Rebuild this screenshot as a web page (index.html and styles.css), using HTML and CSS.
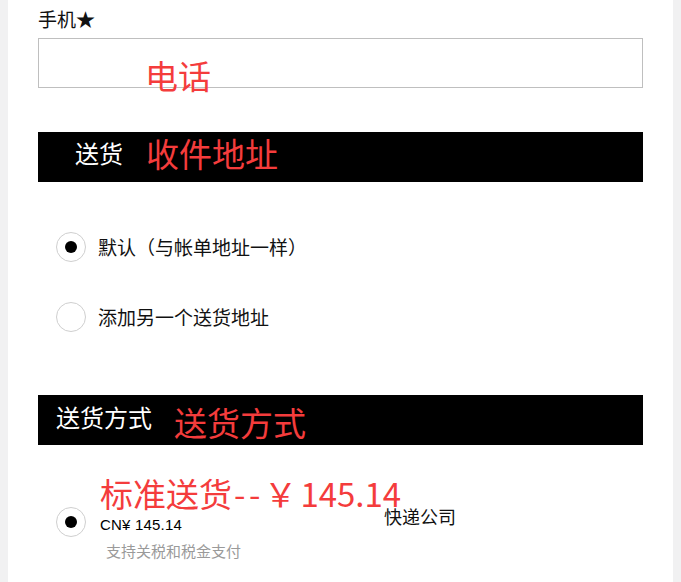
FILE: index.html
```html
<!DOCTYPE html>
<html lang="zh-CN">
<head>
<meta charset="utf-8">
<title>送货</title>
<link rel="stylesheet" href="styles.css">
</head>
<body>
<div class="page">
  <section class="field">
    <label class="field-label" for="phone">手机★</label>
    <input class="field-input" id="phone" type="text">
    <span class="note note-phone">电话</span>
  </section>

  <section class="block">
    <div class="bar bar-delivery">
      <h2 class="bar-title">送货</h2>
      <span class="note note-address">收件地址</span>
    </div>
    <div class="options">
      <div class="option">
        <span class="radio radio-checked"></span>
        <span class="option-label">默认（与帐单地址一样）</span>
      </div>
      <div class="option">
        <span class="radio"></span>
        <span class="option-label">添加另一个送货地址</span>
      </div>
    </div>
  </section>

  <section class="block">
    <div class="bar bar-method">
      <h2 class="bar-title">送货方式</h2>
      <span class="note note-method">送货方式</span>
    </div>
    <div class="shipping">
      <span class="note note-price">标准送货<span class="note-sep">--￥</span>145.14</span>
      <div class="ship-row">
        <span class="radio radio-checked ship-radio"></span>
        <div class="ship-info">
          <div class="ship-price">CN¥ 145.14</div>
          <div class="ship-desc">支持关税和税金支付</div>
        </div>
        <div class="ship-carrier">快递公司</div>
      </div>
    </div>
  </section>
</div>
</body>
</html>
```

FILE: styles.css
```css
html, body {
  margin: 0;
  padding: 0;
}

body {
  background: #f1f1f2;
  font-family: "Noto Sans CJK SC", "Noto Sans", sans-serif;
  color: #111;
}

.page {
  margin: 0 8px;
  background: #fff;
  min-height: 100vh;
  padding: 0 30px 40px;
  box-sizing: border-box;
}

.field {
  position: relative;
  padding-top: 6px;
}

.field-label {
  display: block;
  font-size: 19px;
  line-height: 26px;
  color: #111;
}

.field-input {
  display: block;
  margin: 6px 0 0;
  width: 100%;
  height: 50px;
  box-sizing: border-box;
  border: 1px solid #bfbfbf;
  background: #fff;
  padding: 0 12px;
  font: inherit;
  outline: none;
}

.note {
  position: absolute;
  color: #f43c3c;
  font-size: 33px;
  line-height: 40px;
  white-space: nowrap;
  font-family: "Noto Sans CJK SC", sans-serif;
}

.note-phone {
  left: 107px;
  top: 55px;
}

.block {
  position: relative;
}

.bar {
  position: relative;
  height: 50px;
  box-sizing: border-box;
  background: #000;
  padding-top: 6px;
}

.bar-delivery {
  margin-top: 44px;
  padding-left: 37px;
}

.bar-method {
  margin-top: 63px;
  padding-left: 18px;
  padding-top: 7px;
}

.bar-title {
  margin: 0;
  font-weight: normal;
  font-size: 24px;
  line-height: 30px;
  color: #fff;
}

.note-address {
  left: 108px;
  top: 1px;
}

.note-method {
  left: 136px;
  top: 7px;
}

.options {
  padding: 50px 0 0 18px;
  display: flex;
  flex-direction: column;
  gap: 40px;
}

.option {
  display: flex;
  align-items: center;
  gap: 12px;
  height: 30px;
}

.option-label {
  font-size: 19px;
  line-height: 30px;
  color: #111;
}

.radio {
  flex: none;
  width: 30px;
  height: 30px;
  box-sizing: border-box;
  border: 1px solid #cfcfcf;
  border-radius: 50%;
  display: flex;
  align-items: center;
  justify-content: center;
  background: #fff;
}

.radio-checked::after {
  content: "";
  width: 12px;
  height: 12px;
  border-radius: 50%;
  background: #000;
}

.shipping {
  position: relative;
  padding: 59px 0 0 18px;
}

.note-price {
  left: 62px;
  top: 28px;
}

.note-sep {
  letter-spacing: 3.5px;
  padding-left: 2px;
}

.ship-row {
  display: flex;
  align-items: flex-start;
}

.ship-radio {
  margin-top: 3px;
}

.ship-info {
  width: 284px;
  margin-left: 14px;
  padding-top: 11.7px;
  flex: none;
}

.ship-price {
  font-family: "Liberation Sans", Arial, sans-serif;
  font-size: 15px;
  line-height: 18px;
  color: #000;
  letter-spacing: 0.2px;
}

.ship-desc {
  margin-top: 7.5px;
  padding-left: 6px;
  font-size: 15px;
  line-height: 20px;
  color: #9a9a9a;
}

.ship-carrier {
  font-size: 18px;
  line-height: 24px;
  color: #111;
}
```
